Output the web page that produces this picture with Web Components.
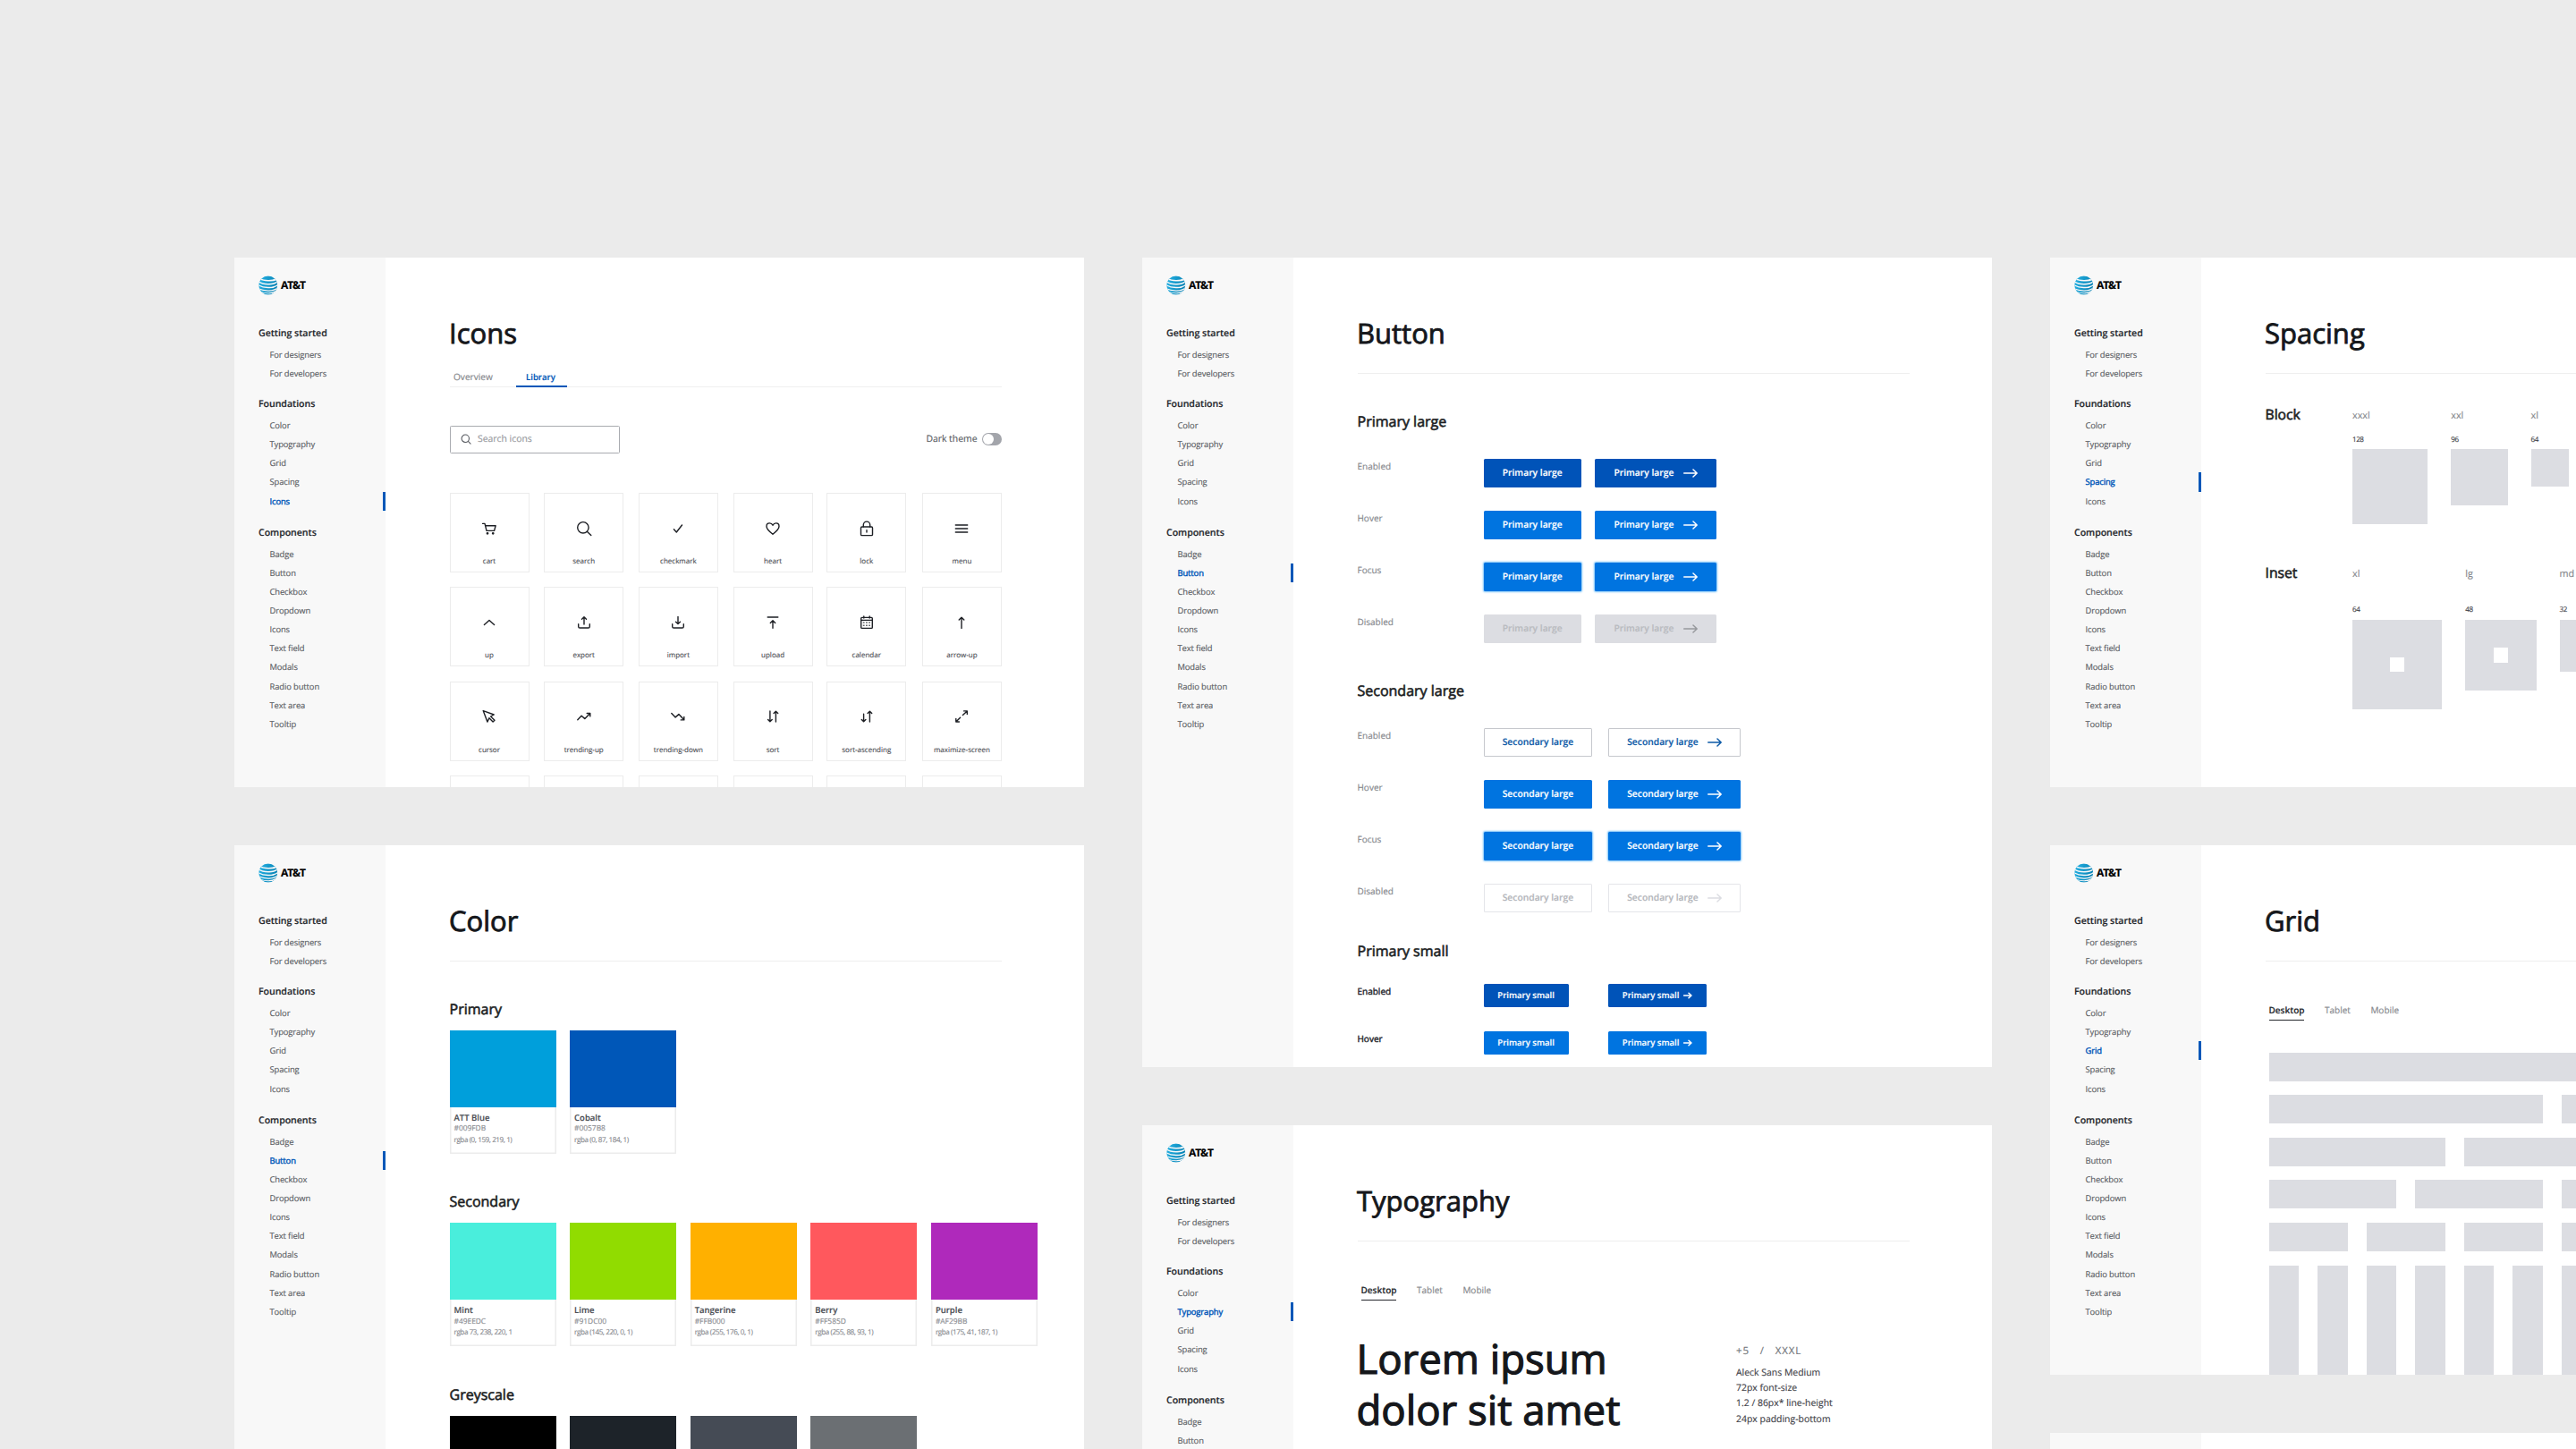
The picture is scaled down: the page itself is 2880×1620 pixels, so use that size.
<!DOCTYPE html>
<html lang="en">
<head>
<meta charset="utf-8">
<title>AT&amp;T Design System</title>
<style>
    html, body {
        margin: 0;
        height: 1620px;
        overflow: hidden;
    }

    body {
        width: 2880px;
        background: #ebebeb;
        font-family: 'Open Sans', 'Noto Sans', sans-serif;
        text-rendering: geometricPrecision;
        -webkit-text-stroke: 0.15px;
        color: #1d1f24;
    }
</style>
</head>
<body>
<page-board></page-board>

<script>
const BLUE = '#0057b8';

const NAV = [
    { title: 'Getting started', items: ['For designers', 'For developers'] },
    { title: 'Foundations', items: ['Color', 'Typography', 'Grid', 'Spacing', 'Icons'] },
    { title: 'Components', items: ['Badge', 'Button', 'Checkbox', 'Dropdown', 'Icons', 'Text field', 'Modals', 'Radio button', 'Text area', 'Tooltip'] }
];

// All glyphs are drawn on a 20x20 grid
const ICONS = {
    'cart': '<path d="M2.6 4.4H5l2 8h8.6l1.5-5.7H5.6"/><circle cx="8" cy="15.3" r=".7"/><circle cx="14.2" cy="15.3" r=".7"/>',
    'search': '<circle cx="8.9" cy="8.8" r="6.2"/><path d="M13.3 13.2l4.5 4.4"/>',
    'checkmark': '<path d="M5.4 10.8l2.9 3.2 6.2-8"/>',
    'heart': '<path d="M10 16.2C6.4 13.4 3 10.6 3 7.4 3 5.2 4.6 3.9 6.4 3.9c1.6 0 2.9.9 3.6 2.4.7-1.5 2-2.4 3.6-2.4C15.4 3.9 17 5.2 17 7.4c0 3.2-3.4 6-7 8.8z"/>',
    'lock': '<rect x="3.5" y="8" width="13" height="9.6" rx="1.2"/><path d="M6.3 8V5.8a3.7 3.7 0 0 1 7.4 0V8M10 11.6v2.4"/>',
    'menu': '<path d="M3.3 6h13.4M3.3 10h13.4M3.3 14h13.4"/>',
    'up': '<path d="M4.4 12.6L10 7.4l5.6 5.2"/>',
    'export': '<path d="M10 12V4M7.5 6.2L10 3.8l2.5 2.4M3.7 11.8v2.6q0 1.6 1.6 1.6h9.4q1.6 0 1.6-1.6v-2.6"/>',
    'import': '<path d="M10 3.4v8M7.5 9.2l2.5 2.4 2.5-2.4M3.7 11.8v2.6q0 1.6 1.6 1.6h9.4q1.6 0 1.6-1.6v-2.6"/>',
    'upload': '<path d="M4.2 4h11.6M10 16.2V8M7.3 10.4L10 7.8l2.7 2.6"/>',
    'calendar': '<rect x="3.7" y="4.4" width="12.6" height="12" rx="1"/><path d="M3.7 7.4h12.6M6.8 2.9v2.2M13.2 2.9v2.2"/><path d="M6.2 10h8M6.2 13.2h8" stroke-width="1" stroke-dasharray="1 2.2"/>',
    'arrow-up': '<path d="M10 16.4V4.4M7.2 7L10 4.2 12.8 7"/>',
    'cursor': '<path d="M3.2 3.6l12 4.4-3.6 2 4.4 4.2-1.9 1.9-4.2-4.3-2 4.3z"/>',
    'trending-up': '<path d="M2.8 13.8l4.3-4.5 3.8 3.3 5.6-5.8M13.2 6.5h3.6v3.4"/>',
    'trending-down': '<path d="M2.8 6.4l4.3 4.5 3.8-3.3 5.6 5.8M13.2 13.9h3.6v-3.4"/>',
    'sort': '<path d="M6.9 4v11.6M4.6 13.4l2.3 2.4 2.3-2.4M13.4 16V4.4M11.1 6.6l2.3-2.4 2.3 2.4"/>',
    'sort-ascending': '<path d="M6.6 7.2v8.4M4.3 13.4l2.3 2.4 2.3-2.4M13.4 16V4.4M11.1 6.6l2.3-2.4 2.3 2.4"/>',
    'maximize-screen': '<path d="M4 15.8L8.6 11.2M11.4 8.6L16 4.2M12.6 3.9h3.7v3.6M3.8 12.4V16h3.6"/>'
};

class AttLogo extends HTMLElement {
    constructor() {
        super();
        const shadow = this.attachShadow({ mode: 'open' });

        shadow.innerHTML = `
            <style>
                :host {
                    display: flex;
                    align-items: center;
                    height: 22px;
                    gap: 3.5px;
                }

                svg {
                    width: 21.5px;
                    height: 22px;
                    flex: none;
                }

                span {
                    font-size: 12px;
                    line-height: 22px;
                    font-weight: 700;
                    letter-spacing: -1.1px;
                    color: #000;
                }
            </style>

            <svg viewBox="0 0 22 22">
                <defs>
                    <clipPath id="globe"><circle cx="11" cy="11" r="10.7"/></clipPath>
                    <linearGradient id="sea" x1="0" x2="1" y1="0" y2=".3">
                        <stop offset="0" stop-color="#27b4e6"/>
                        <stop offset="1" stop-color="#0883b5"/>
                    </linearGradient>
                </defs>
                <g clip-path="url(#globe)">
                    <rect width="22" height="22" fill="url(#sea)"/>
                    <g fill="#f8f8f8">
                        <path d="M2.5 2.8Q5 4.700 11 4.8T19.5 2.8L21 4.8Q17.5 6.8 11 6.3T1.500 4.3z"/>
                        <path d="M0 5.8Q4 8.9 11 8.9T22 5.6V7.5Q18 10.9 11 10.5T0 7.3z"/>
                        <path d="M0 10.2Q5 13 11.5 12.9T22 9.600V11.6Q17.5 14.8 11 14.4T0 11.5z"/>
                        <path d="M0 14.3Q5 16.6 11.5 16.5T22 13V15.2Q17 18.3 11 17.9T0 15.5z"/>
                        <path d="M3 18.2Q7 19.6 11.5 19.4T20 16.8V18.6Q16 20.7 11 20.5T3 19.2z"/>
                    </g>
                </g>
            </svg>
            <span>AT&amp;T</span>
        `;
    }
}

class DocSidebar extends HTMLElement {
    connectedCallback() {
        const active = this.getAttribute('active') || '';
        const shadow = this.attachShadow({ mode: 'open' });

        // "Group/Item", since Icons is listed in two groups
        const groups = NAV.map(group => `
            <section>
                <h2>${group.title}</h2>
                ${group.items.map(item => `
                    <a class="${active === group.title + '/' + item ? 'active' : ''}">${item}</a>
                `).join('')}
            </section>
        `).join('');

        shadow.innerHTML = `
            <style>
                :host {
                    display: block;
                    box-sizing: border-box;
                    width: 169px;
                    flex: none;
                    padding-top: 19.5px;
                    background: #f8f8f8;
                }

                att-logo {
                    margin: 0 0 33.3px 27px;
                }

                section {
                    padding-bottom: 13.9px;
                }

                section + section {
                    padding-bottom: 14.9px;
                }

                h2 {
                    margin: 0 0 3px;
                    padding-left: 27px;
                    font-size: 10.6px;
                    line-height: 20px;
                    font-weight: 600;
                    letter-spacing: -0.05px;
                    color: #25272c;
                }

                a {
                    display: block;
                    height: 21.15px;
                    line-height: 21.15px;
                    padding-left: 39.5px;
                    font-size: 9.4px;
                    letter-spacing: -0.1px;
                    color: #5a5d63;
                }

                a.active {
                    color: ${BLUE};
                    -webkit-text-stroke: 0.4px ${BLUE};
                    border-right: 3px solid ${BLUE};
                }
            </style>

            <att-logo></att-logo>
            ${groups}
        `;
    }
}

class DocPage extends HTMLElement {
    connectedCallback() {
        const shadow = this.attachShadow({ mode: 'open' });
        const title = this.getAttribute('heading');

        shadow.innerHTML = `
            <style>
                :host {
                    display: flex;
                    box-sizing: border-box;
                    width: 950px;
                    height: 592px;
                    flex: none;
                    overflow: hidden;
                    background: #fff;
                }

                main {
                    width: 617.5px;
                    padding: 64.5px 0 0 71.5px;
                }

                header {
                    box-sizing: border-box;
                    height: 65px;
                    border-bottom: 1.5px solid #efefef;
                }

                :host([tabbed]) header {
                    height: 80.5px;
                }

                h1 {
                    margin: 0 0 18px -0.5px;
                    font-size: 31px;
                    line-height: 40px;
                    font-weight: 400;
                    -webkit-text-stroke: 0.85px #15171b;
                    color: #15171b;
                }

                .blank {
                    width: 169px;
                    background: #f8f8f8;
                }
            </style>

            ${title ? `
                <doc-sidebar active="${this.getAttribute('active')}"></doc-sidebar>
                <main>
                    <header>
                        <h1>${title}</h1>
                        <slot name="tabs"></slot>
                    </header>
                    <slot></slot>
                </main>
            ` : '<div class="blank"></div>'}
        `;
    }
}

class IconsTabs extends HTMLElement {
    constructor() {
        super();
        const shadow = this.attachShadow({ mode: 'open' });

        shadow.innerHTML = `
            <style>
                :host {
                    display: flex;
                    height: 22px;
                    font-size: 10.1px;
                    line-height: 21px;
                    color: #85878c;
                }

                span {
                    box-sizing: border-box;
                    height: 22.5px;
                    width: 74.5px;
                    padding-left: 4.5px;
                }

                .active {
                    width: 57px;
                    padding-left: 11px;
                    font-size: 9.6px;
                    font-weight: 600;
                    color: ${BLUE};
                    border-bottom: 2px solid ${BLUE};
                }
            </style>

            <span>Overview</span>
            <span class="active">Library</span>
        `;
    }
}

class IconTile extends HTMLElement {
    connectedCallback() {
        const name = this.getAttribute('name');
        const shadow = this.attachShadow({ mode: 'open' });

        shadow.innerHTML = `
            <style>
                :host {
                    display: flex;
                    flex-direction: column;
                    align-items: center;
                    box-sizing: border-box;
                    width: 89px;
                    height: 89px;
                    padding-top: 28.5px;
                    border: 1.5px solid #ececec;
                    white-space: nowrap;
                }

                svg {
                    width: 20px;
                    height: 20px;
                    fill: none;
                    stroke: #1d1f24;
                    stroke-width: 1.4;
                    stroke-linecap: round;
                    stroke-linejoin: round;
                }

                span {
                    margin-top: 20.5px;
                    font-size: 8px;
                    line-height: 14px;
                    color: #505257;
                }
            </style>

            ${name ? `<svg viewBox="0 0 20 20">${ICONS[name]}</svg><span>${name}</span>` : ''}
        `;
    }
}

class IconLibrary extends HTMLElement {
    constructor() {
        super();
        const shadow = this.attachShadow({ mode: 'open' });
        const tiles = Object.keys(ICONS).concat(Array(6).fill(''));

        shadow.innerHTML = `
            <style>
                :host {
                    display: block;
                    padding-top: 42.5px;
                }

                .toolbar {
                    display: flex;
                    align-items: center;
                    justify-content: space-between;
                    height: 31.5px;
                    margin-bottom: 44px;
                }

                .search {
                    display: flex;
                    align-items: center;
                    box-sizing: border-box;
                    width: 190.5px;
                    height: 31.5px;
                    padding-left: 11.5px;
                    gap: 7px;
                    border: 1px solid #a9abb0;
                    border-radius: 1.5px;
                    font-size: 10.4px;
                    color: #97999e;
                }

                .search svg {
                    width: 12px;
                    height: 12px;
                    fill: none;
                    stroke: #55585e;
                    stroke-width: 1.8;
                    stroke-linecap: round;
                }

                .theme {
                    display: flex;
                    align-items: center;
                    gap: 5px;
                    font-size: 10.4px;
                    color: #5a5d63;
                }

                .toggle {
                    box-sizing: border-box;
                    width: 22.5px;
                    height: 14px;
                    padding: 1px;
                    border-radius: 7px;
                    background: #a3a5ab;
                }

                .knob {
                    width: 12px;
                    height: 12px;
                    border-radius: 50%;
                    background: #fff;
                }

                .grid {
                    display: grid;
                    grid-template-columns: repeat(6, 89px);
                    justify-content: space-between;
                    row-gap: 16.3px;
                }

                icon-tile:nth-child(6n + 5) {
                    margin-left: -1px;
                }
            </style>

            <div class="toolbar">
                <div class="search">
                    <svg viewBox="0 0 20 20"><circle cx="8.8" cy="8.8" r="7"/><path d="M14 14l4.5 4.5"/></svg>
                    <span>Search icons</span>
                </div>
                <div class="theme">
                    <span>Dark theme</span>
                    <div class="toggle"><div class="knob"></div></div>
                </div>
            </div>
            <div class="grid">
                ${tiles.map(name => `<icon-tile name="${name}"></icon-tile>`).join('')}
            </div>
        `;
    }
}

class ColorSwatch extends HTMLElement {
    connectedCallback() {
        const shadow = this.attachShadow({ mode: 'open' });

        shadow.innerHTML = `
            <style>
                :host {
                    display: block;
                    box-sizing: border-box;
                    width: 119px;
                    height: 138px;
                    flex: none;
                    box-shadow: inset 0 0 0 1.5px #ececec;
                    white-space: nowrap;
                }

                .fill {
                    height: 86px;
                    background: ${this.getAttribute('fill')};
                }

                .text {
                    display: flex;
                    flex-direction: column;
                    padding: 5.5px 0 0 5px;
                    font-size: 8.4px;
                    line-height: 12.7px;
                    color: #8b8d92;
                }

                b {
                    font-size: 9.5px;
                    font-weight: 600;
                    color: #4b4e54;
                }

                .rgba {
                    font-size: 8.1px;
                    letter-spacing: -0.42px;
                }
            </style>

            <div class="fill"></div>
            <div class="text">
                <b>${this.getAttribute('name')}</b>
                <span>${this.getAttribute('hex')}</span>
                <span class="rgba">${this.getAttribute('rgba')}</span>
            </div>
        `;
    }
}

class SwatchGroup extends HTMLElement {
    connectedCallback() {
        const shadow = this.attachShadow({ mode: 'open' });

        shadow.innerHTML = `
            <style>
                :host {
                    display: block;
                    margin-bottom: 43.3px;
                }

                h2 {
                    margin: 0 0 14px;
                    font-size: 16px;
                    line-height: 20px;
                    font-weight: 400;
                    -webkit-text-stroke: 0.6px #1d1f24;
                }

                .row {
                    display: flex;
                    gap: 15.6px;
                }
            </style>

            <h2>${this.getAttribute('heading')}</h2>
            <div class="row"><slot></slot></div>
        `;
    }
}

class DemoButton extends HTMLElement {
    connectedCallback() {
        const shadow = this.attachShadow({ mode: 'open' });
        const small = this.hasAttribute('small');
        const arrow = small
            ? '<svg viewBox="0 0 10 8" width="10" height="8"><path d="M.5 4H9M6 1.2L9 4 6 6.8"/></svg>'
            : '<svg viewBox="0 0 16 10" width="16" height="10"><path d="M.7 5H15M11 1l4.2 4L11 9"/></svg>';

        shadow.innerHTML = `
            <style>
                :host {
                    display: flex;
                    align-items: center;
                    box-sizing: border-box;
                    width: max-content;
                    height: 32px;
                    padding: 0 21.2px;
                    gap: 10.5px;
                    border-radius: 1.5px;
                    font-size: 10.3px;
                    font-weight: 600;
                    line-height: 20px;
                    white-space: nowrap;
                    color: #fff;
                    background: #0053b8;
                }

                :host([small]) {
                    height: 26px;
                    padding: 0 15.8px;
                    gap: 5px;
                    font-size: 9.55px;
                }

                :host([state="hover"]) {
                    background: #0074e0;
                }

                :host([state="focus"]) {
                    background: #0074e0;
                    box-shadow: 0 0 2px 1px #7cc4f8;
                }

                :host([state="disabled"]) {
                    background: #dcdde2;
                    color: #b9bbc0;
                    --arrow: #97999d;
                }

                :host([outline][state="enabled"]) {
                    background: #fff;
                    color: #0d5aa7;
                    box-shadow: inset 0 0 0 1px #c6c8cd;
                }

                :host([outline][state="disabled"]) {
                    background: #fff;
                    color: #b4b6bb;
                    --arrow: #dcdde2;
                    box-shadow: inset 0 0 0 1px #e4e5e9;
                }

                svg {
                    fill: none;
                    stroke: var(--arrow, currentColor);
                    stroke-width: 1.5;
                    stroke-linecap: round;
                    stroke-linejoin: round;
                }
            </style>

            <slot></slot>
            ${this.hasAttribute('arrow') ? arrow : ''}
        `;
    }
}

class ButtonStates extends HTMLElement {
    connectedCallback() {
        const heading = this.getAttribute('heading');
        const kind = this.getAttribute('kind') || '';
        const states = this.getAttribute('states').split(' ');
        const shadow = this.attachShadow({ mode: 'open' });

        shadow.innerHTML = `
            <style>
                :host {
                    display: block;
                    margin-bottom: 43.2px;
                }

                :host([kind="outline"]) {
                    margin-bottom: 33px;
                }

                h2 {
                    margin: 0 0 31.7px;
                    font-size: 16px;
                    line-height: 20px;
                    font-weight: 400;
                    -webkit-text-stroke: 0.6px #1d1f24;
                }

                :host([kind="small"]) h2 {
                    margin-bottom: 26.7px;
                }

                .row {
                    display: grid;
                    grid-template-columns: 141px var(--col, 139.5px) auto;
                    margin-bottom: 26.1px;
                }

                :host([kind="small"]) .row {
                    margin-bottom: 26.8px;
                }

                .row:last-child {
                    margin-bottom: 0;
                }

                .label {
                    font-size: 10px;
                    line-height: 16.4px;
                    color: #85878c;
                }

                :host([kind="small"]) .label {
                    color: #25272c;
                    -webkit-text-stroke: 0.4px #25272c;
                }
            </style>

            <h2>${heading}</h2>
            ${states.map(state => `
                <div class="row">
                    <span class="label">${state[0].toUpperCase() + state.slice(1)}</span>
                    <demo-button ${kind} state="${state}">${heading}</demo-button>
                    <demo-button ${kind} state="${state}" arrow>${heading}</demo-button>
                </div>
            `).join('')}
        `;
    }
}

class DeviceTabs extends HTMLElement {
    constructor() {
        super();
        const shadow = this.attachShadow({ mode: 'open' });

        shadow.innerHTML = `
            <style>
                :host {
                    display: flex;
                    gap: 22.5px;
                    height: 21.5px;
                    padding-left: 4px;
                    font-size: 10px;
                    line-height: 18.4px;
                    color: #85878c;
                }

                span.active {
                    font-weight: 600;
                    color: #25272c;
                    border-bottom: 1.5px solid #25272c;
                }
            </style>

            <span class="active">Desktop</span>
            <span>Tablet</span>
            <span>Mobile</span>
        `;
    }
}

class TypeSample extends HTMLElement {
    constructor() {
        super();
        const shadow = this.attachShadow({ mode: 'open' });

        shadow.innerHTML = `
            <style>
                :host {
                    display: flex;
                    padding-top: 36.8px;
                }

                .sample {
                    width: 424.5px;
                    margin-left: -1px;
                    font-size: 45.5px;
                    line-height: 57px;
                    -webkit-text-stroke: 1.2px #15171b;
                    color: #15171b;
                }

                .spec {
                    padding-top: 11px;
                    font-size: 10.45px;
                    line-height: 17.2px;
                    color: #3f4248;
                    white-space: nowrap;
                }

                .scale {
                    display: flex;
                    gap: 12px;
                    margin-bottom: 8px;
                    letter-spacing: 0.8px;
                    font-size: 11.5px;
                    color: #74777c;
                }
            </style>

            <div class="sample">Lorem ipsum<br>dolor sit amet</div>
            <div class="spec">
                <div class="scale"><span>+5</span><span>/</span><span>XXXL</span></div>
                <div>Aleck Sans Medium</div>
                <div>72px font-size</div>
                <div>1.2 / 86px* line-height</div>
                <div>24px padding-bottom</div>
            </div>
        `;
    }
}

class SpaceRow extends HTMLElement {
    connectedCallback() {
        const inset = this.hasAttribute('inset');
        const shadow = this.attachShadow({ mode: 'open' });

        // each size is "name:value:pixels"
        const boxes = this.getAttribute('sizes').split(' ').map(size => {
            const [name, value, px] = size.split(':');
            return `
                <div class="size">
                    <span class="name">${name}</span>
                    <span class="value">${value}</span>
                    <div class="box" style="width: ${px}px; height: ${px}px">${inset ? '<i></i>' : ''}</div>
                </div>
            `;
        }).join('');

        shadow.innerHTML = `
            <style>
                :host {
                    display: flex;
                    white-space: nowrap;
                }

                h2 {
                    width: 97.5px;
                    flex: none;
                    margin: 0;
                    font-size: 15.7px;
                    line-height: 20px;
                    font-weight: 400;
                    -webkit-text-stroke: 0.6px #1d1f24;
                }

                .sizes {
                    display: flex;
                    gap: 26px;
                }

                .size {
                    display: flex;
                    flex-direction: column;
                    padding-top: 2px;
                }

                .name {
                    height: 20px;
                    font-size: 10.8px;
                    line-height: 20px;
                    color: #85878c;
                }

                .value {
                    margin: 11px 0 3.5px;
                    font-size: 8px;
                    line-height: 12px;
                    letter-spacing: -0.4px;
                    color: #3f4248;
                }

                :host([inset]) .value {
                    margin-top: 23.5px;
                    margin-bottom: 5.2px;
                }

                .box {
                    display: flex;
                    align-items: center;
                    justify-content: center;
                    background: #dcdde2;
                }

                i {
                    width: 16.3px;
                    height: 16.3px;
                    background: #fff;
                }
            </style>

            <h2>${this.getAttribute('heading')}</h2>
            <div class="sizes">${boxes}</div>
        `;
    }
}

class ColumnGrid extends HTMLElement {
    constructor() {
        super();
        const shadow = this.attachShadow({ mode: 'open' });
        const bars = [12, 6, 4, 3, 2, 1].map(span =>
            `<div class="${span === 1 ? 'tall' : ''}" style="grid-column: span ${span}"></div>`.repeat(12 / span)
        ).join('');

        shadow.innerHTML = `
            <style>
                :host {
                    display: grid;
                    grid-template-columns: repeat(12, 33.6px);
                    gap: 15.6px 21px;
                    margin: 35.6px 0 0 4px;
                }

                div {
                    height: 32px;
                    background: #dcdde2;
                }

                .tall {
                    height: 180px;
                }
            </style>

            ${bars}
        `;
    }
}

class PageBoard extends HTMLElement {
    constructor() {
        super();
        const shadow = this.attachShadow({ mode: 'open' });

        shadow.innerHTML = `
            <style>
                :host {
                    display: flex;
                    align-items: flex-start;
                    gap: 65px;
                    box-sizing: border-box;
                    height: 1620px;
                    padding: 288px 0 0 262px;
                    overflow: hidden;
                }

                .column {
                    display: flex;
                    flex-direction: column;
                    gap: 65px;
                }

                .buttons,
                .colors {
                    height: 905px;
                }

                .body {
                    padding-top: 43.5px;
                }

                .tabs {
                    padding-top: 45px;
                }

                .spacing {
                    display: flex;
                    flex-direction: column;
                    gap: 44.4px;
                    padding-top: 35.5px;
                }

                .first {
                    --col: 124.7px;
                }
            </style>

            <div class="column">
                <doc-page heading="Icons" active="Foundations/Icons" tabbed>
                    <icons-tabs slot="tabs"></icons-tabs>
                    <icon-library></icon-library>
                </doc-page>
                <doc-page class="colors" heading="Color" active="Components/Button">
                    <div class="body">
                        <swatch-group heading="Primary">
                            <color-swatch fill="#009fdb" name="ATT Blue" hex="#009FDB" rgba="rgba (0, 159, 219, 1)"></color-swatch>
                            <color-swatch fill="#0057b8" name="Cobalt" hex="#0057B8" rgba="rgba (0, 87, 184, 1)"></color-swatch>
                        </swatch-group>
                        <swatch-group heading="Secondary">
                            <color-swatch fill="#49eedc" name="Mint" hex="#49EEDC" rgba="rgba 73, 238, 220, 1"></color-swatch>
                            <color-swatch fill="#91dc00" name="Lime" hex="#91DC00" rgba="rgba (145, 220, 0, 1)"></color-swatch>
                            <color-swatch fill="#ffb000" name="Tangerine" hex="#FFB000" rgba="rgba (255, 176, 0, 1)"></color-swatch>
                            <color-swatch fill="#ff585d" name="Berry" hex="#FF585D" rgba="rgba (255, 88, 93, 1)"></color-swatch>
                            <color-swatch fill="#af29bb" name="Purple" hex="#AF29BB" rgba="rgba (175, 41, 187, 1)"></color-swatch>
                        </swatch-group>
                        <swatch-group heading="Greyscale">
                            <color-swatch fill="#000000" name="" hex="" rgba=""></color-swatch>
                            <color-swatch fill="#1d2329" name="" hex="" rgba=""></color-swatch>
                            <color-swatch fill="#454b55" name="" hex="" rgba=""></color-swatch>
                            <color-swatch fill="#6b6f73" name="" hex="" rgba=""></color-swatch>
                        </swatch-group>
                    </div>
                </doc-page>
            </div>

            <div class="column">
                <doc-page class="buttons" heading="Button" active="Components/Button">
                    <div class="body">
                        <button-states class="first" heading="Primary large" states="enabled hover focus disabled"></button-states>
                        <button-states heading="Secondary large" kind="outline" states="enabled hover focus disabled"></button-states>
                        <button-states heading="Primary small" kind="small" states="enabled hover"></button-states>
                    </div>
                </doc-page>
                <doc-page heading="Typography" active="Foundations/Typography">
                    <div class="tabs">
                        <device-tabs></device-tabs>
                        <type-sample></type-sample>
                    </div>
                </doc-page>
            </div>

            <div class="column">
                <doc-page heading="Spacing" active="Foundations/Spacing">
                    <div class="spacing">
                        <space-row heading="Block" sizes="xxxl:128:84.3 xxl:96:63.3 xl:64:42.2"></space-row>
                        <space-row heading="Inset" inset sizes="xl:64:100.3 lg:48:79.3 md:32:58.3"></space-row>
                    </div>
                </doc-page>
                <doc-page heading="Grid" active="Foundations/Grid">
                    <div class="tabs">
                        <device-tabs></device-tabs>
                        <column-grid></column-grid>
                    </div>
                </doc-page>
                <doc-page></doc-page>
            </div>
        `;
    }
}

customElements.define('att-logo', AttLogo);
customElements.define('doc-sidebar', DocSidebar);
customElements.define('doc-page', DocPage);
customElements.define('icons-tabs', IconsTabs);
customElements.define('icon-tile', IconTile);
customElements.define('icon-library', IconLibrary);
customElements.define('color-swatch', ColorSwatch);
customElements.define('swatch-group', SwatchGroup);
customElements.define('demo-button', DemoButton);
customElements.define('button-states', ButtonStates);
customElements.define('device-tabs', DeviceTabs);
customElements.define('type-sample', TypeSample);
customElements.define('space-row', SpaceRow);
customElements.define('column-grid', ColumnGrid);
customElements.define('page-board', PageBoard);
</script>
</body>
</html>
